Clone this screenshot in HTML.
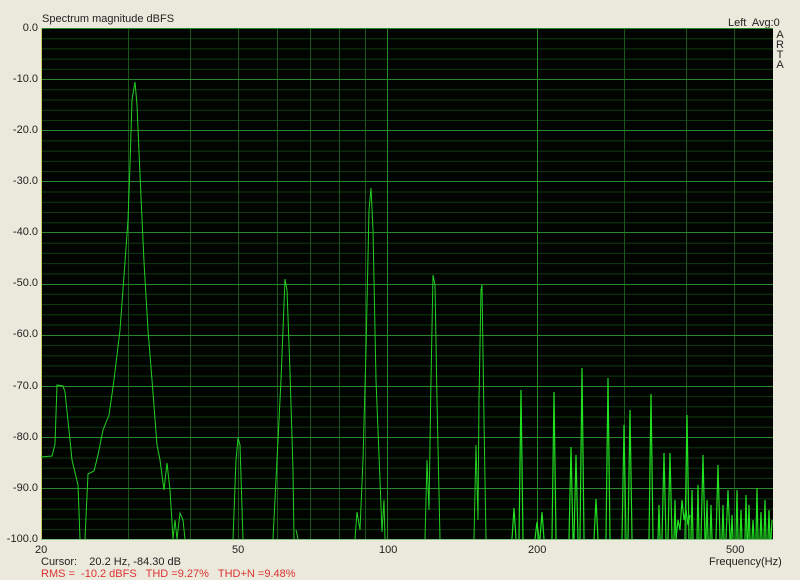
<!DOCTYPE html>
<html><head><style>
html,body{margin:0;padding:0;background:#ebe9db;width:800px;height:580px;overflow:hidden;font-family:"Liberation Sans",sans-serif;font-size:11px;color:#222}
.t{position:absolute;white-space:nowrap;line-height:12px}
.yl{position:absolute;right:762px;width:40px;text-align:right;line-height:12px}
</style></head><body>
<div class="t" style="left:42px;top:13px">Spectrum magnitude dBFS</div>
<div class="t" style="left:728px;top:17px">Left&nbsp; Avg:0</div>
<div class="t" style="left:776px;top:30px;line-height:10px;width:8px;text-align:center">A<br>R<br>T<br>A</div>
<div class="yl" style="top:22px">0.0</div>
<div class="yl" style="top:73px">-10.0</div>
<div class="yl" style="top:124px">-20.0</div>
<div class="yl" style="top:175px">-30.0</div>
<div class="yl" style="top:226px">-40.0</div>
<div class="yl" style="top:277px">-50.0</div>
<div class="yl" style="top:328px">-60.0</div>
<div class="yl" style="top:380px">-70.0</div>
<div class="yl" style="top:431px">-80.0</div>
<div class="yl" style="top:482px">-90.0</div>
<div class="yl" style="top:533px">-100.0</div>
<div class="t" style="left:35px;top:544px">20</div>
<div class="t" style="left:232px;top:544px">50</div>
<div class="t" style="left:379px;top:544px">100</div>
<div class="t" style="left:528px;top:544px">200</div>
<div class="t" style="left:726px;top:544px">500</div>
<div class="t" style="left:709px;top:556px">Frequency(Hz)</div>
<div class="t" style="left:41px;top:556px">Cursor:&nbsp;&nbsp;&nbsp; 20.2 Hz, -84.30 dB</div>
<div class="t" style="left:41px;top:568px;color:#d33">RMS =&nbsp; -10.2 dBFS&nbsp;&nbsp; THD =9.27%&nbsp;&nbsp; THD+N =9.48%</div>
<svg style="position:absolute;left:0;top:0" width="800" height="580">
<rect x="41" y="28" width="732" height="511" fill="#020402"/>
<g stroke="#0e3a0e" stroke-width="1">
<path d="M41 38.7H773M41 48.9H773M41 59.1H773M41 69.4H773M41 89.8H773M41 100H773M41 110.3H773M41 120.5H773M41 140.9H773M41 151.2H773M41 161.4H773M41 171.6H773M41 192H773M41 202.3H773M41 212.5H773M41 222.7H773M41 243.2H773M41 253.4H773M41 263.6H773M41 273.9H773M41 294.3H773M41 304.5H773M41 314.8H773M41 325H773M41 345.5H773M41 355.7H773M41 365.9H773M41 376.1H773M41 396.6H773M41 406.8H773M41 417H773M41 427.3H773M41 447.7H773M41 458H773M41 468.2H773M41 478.4H773M41 498.9H773M41 509.1H773M41 519.3H773M41 529.6H773"/>
</g>
<g stroke="#1a561a"><path d="M128.5 28V539M190.5 28V539M238.5 28V539M277.5 28V539M310.5 28V539M339.5 28V539M365.5 28V539M624.5 28V539M686.5 28V539M734.5 28V539"/></g>
<g stroke="#2a8a2a"><path d="M41 28.5H773M41 79.5H773M41 130.5H773M41 181.5H773M41 232.5H773M41 284.5H773M41 335.5H773M41 386.5H773M41 437.5H773M41 488.5H773"/><path d="M387.5 28V539M537.5 28V539"/></g>
<line x1="41.5" y1="28" x2="41.5" y2="540" stroke="#c8c860"/>
<line x1="41" y1="539.5" x2="773" y2="539.5" stroke="#80c080"/>
<g fill="none" stroke="#22d022" stroke-width="1">
<path d="M41 457L52 456L55 444L57 385L63 386L65 392L70 440L72 460L78 485L80 539M85 539L88 474L94 471L98 455L103 430L109 415L114 380L120 330L125 262L128 220L130 165L132 100L135 82L137 105L140 175L144 262L148 330L152 380L157 445L160 460L164 490L167 463L170 490L173 539L175 520L177 539L180 513L183 520L185 539"/>
<path d="M233 539L236 460L238 438L240 445L243 539M273 539L278 440L281 380L285 279L287 290L290 372L293 470L294 539M296 530L298 539M355 539L357 512L360 530L363 460L366 350L369 210L371 188L373 230L376 380L380 480L382 532L384 500L385 539M425 539L427 460L429 510L431 380L433 275L435 285L437 400L440 539M474 539L476 445L478 520L479 400L481 290L482 285L484 420L486 539"/>
</g>
<g fill="none" stroke="#22e022" stroke-width="1.2">
<path d="M512 539L514 508L516 539M519 539L521 390L523 539M535 539L537 522L539 539M540 539L542 512L544 539M552 539L554 392L556 539M569 539L571 447L573 539M574 539L576 455L578 539M580 539L582 368L584 539M594 539L596 499L598 539M606 539L608 378L610 539M622 539L624 425L626 539M628 539L630 410L632 539M649 539L651 394L653 539M658 539L659 505L660 539M662 539L664 453L666 539M668 539L670 453L672 539M674 539L675 500L676 539M685 539L687 415L689 539M691 539L692 490L693 539M697 539L698 485L699 539M701 539L703 455L705 539M706 539L707 500L708 539M710 539L711 505L712 539M716 539L718 465L720 539M722 539L723 505L724 539M726 539L728 490L730 539M731 539L732 515L733 539M736 539L737 490L738 539M740 539L741 510L742 539M745 539L746 495L747 539M748 539L749 505L750 539M752 539L753 520L754 539M756 539L757 488L758 539M760 539L761 512L762 539M764 539L765 500L766 539M768 539L769 510L770 539M771 539L772 520"/>
<path d="M676 539L678 520L680 530L682 500L684 520L686 510L688 525L690 515" />
</g>
</svg>
</body></html>
